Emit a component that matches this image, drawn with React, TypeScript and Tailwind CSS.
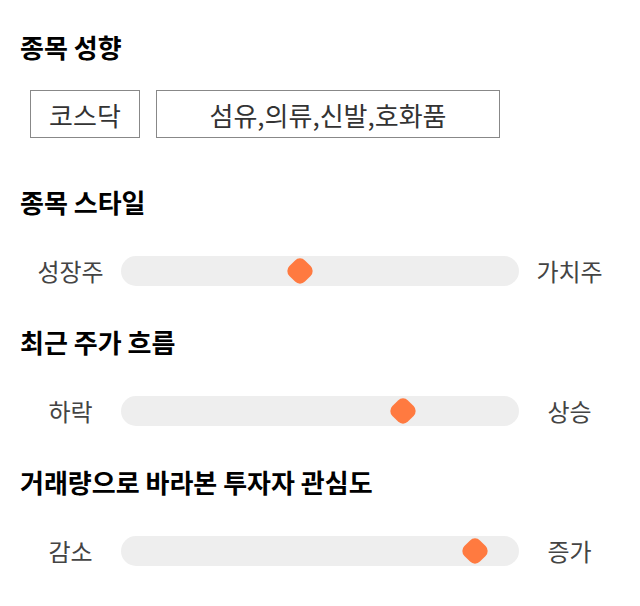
import React from "react";

const font = { fontFamily: '"Noto Sans CJK KR", "Noto Sans", sans-serif' };

function Title({ children }: { children: React.ReactNode }) {
  return <h2 className="text-[26px] leading-[30px] font-bold text-black">{children}</h2>;
}

function Slider({ left, right, pos }: { left: string; right: string; pos: number }) {
  return (
    <div className="flex items-center h-[30px] mt-[39px]">
      <div className="w-[101px] text-center text-[24px] leading-[30px] text-[#444]">{left}</div>
      <div className="relative flex-1 h-[30px] rounded-full bg-[#eeeeee]">
        <div
          className="absolute top-1/2 w-[22px] h-[22px] rounded-[7px] bg-[#ff7a40]"
          style={{ left: pos, transform: "translate(-50%, -50%) rotate(45deg)" }}
        />
      </div>
      <div className="w-[101px] text-center text-[24px] leading-[30px] text-[#444]">{right}</div>
    </div>
  );
}

export default function App() {
  return (
    <div className="w-[640px] h-[606px] bg-white px-5 pt-[32px]" style={font}>
      <Title>종목 성향</Title>
      <div className="flex gap-4 mt-[28px] pl-[10px]">
        <div className="w-[110px] h-[48px] border border-[#888] flex items-center justify-center text-[26px] text-[#333]">
          코스닥
        </div>
        <div className="w-[344px] h-[48px] border border-[#888] flex items-center justify-center text-[26px] text-[#333]">
          섬유,의류,신발,호화품
        </div>
      </div>
      <div className="mt-[49px]">
        <Title>종목 스타일</Title>
        <Slider left="성장주" right="가치주" pos={179} />
      </div>
      <div className="mt-[41px]">
        <Title>최근 주가 흐름</Title>
        <Slider left="하락" right="상승" pos={282} />
      </div>
      <div className="mt-[41px]">
        <Title>거래량으로 바라본 투자자 관심도</Title>
        <Slider left="감소" right="증가" pos={354} />
      </div>
    </div>
  );
}
